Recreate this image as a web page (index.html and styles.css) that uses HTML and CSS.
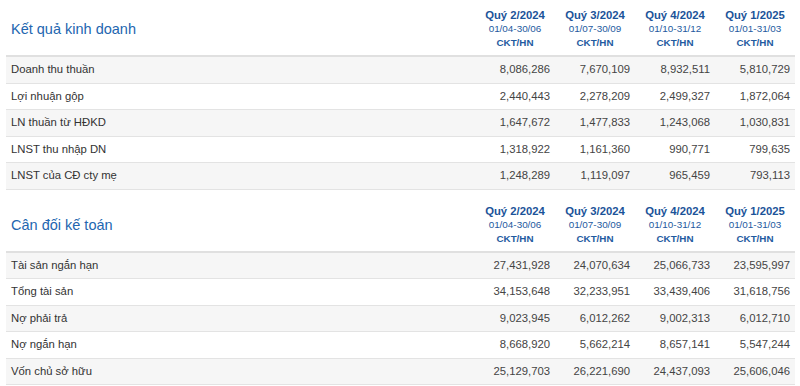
FILE: index.html
```html
<!DOCTYPE html>
<html lang="vi">

<head>
    <meta charset="UTF-8">
    <meta name="viewport" content="width=device-width, initial-scale=1.0">
    <title>Kết quả kinh doanh</title>
    <link rel="stylesheet" href="styles.css">
</head>

<body>
    <div class="finance">
        <table class="fin-table">
            <thead>
                <tr>
                    <th class="title">Kết quả kinh doanh</th>
                    <th class="period"><b>Quý 2/2024</b><span>01/04-30/06</span><b class="audit">CKT/HN</b></th>
                    <th class="period"><b>Quý 3/2024</b><span>01/07-30/09</span><b class="audit">CKT/HN</b></th>
                    <th class="period"><b>Quý 4/2024</b><span>01/10-31/12</span><b class="audit">CKT/HN</b></th>
                    <th class="period"><b>Quý 1/2025</b><span>01/01-31/03</span><b class="audit">CKT/HN</b></th>
                </tr>
            </thead>
            <tbody>
                <tr><td>Doanh thu thuần</td><td>8,086,286</td><td>7,670,109</td><td>8,932,511</td><td>5,810,729</td></tr>
                <tr><td>Lợi nhuận gộp</td><td>2,440,443</td><td>2,278,209</td><td>2,499,327</td><td>1,872,064</td></tr>
                <tr><td>LN thuần từ HĐKD</td><td>1,647,672</td><td>1,477,833</td><td>1,243,068</td><td>1,030,831</td></tr>
                <tr><td>LNST thu nhập DN</td><td>1,318,922</td><td>1,161,360</td><td>990,771</td><td>799,635</td></tr>
                <tr><td>LNST của CĐ cty mẹ</td><td>1,248,289</td><td>1,119,097</td><td>965,459</td><td>793,113</td></tr>
            </tbody>
        </table>

        <table class="fin-table">
            <thead>
                <tr>
                    <th class="title">Cân đối kế toán</th>
                    <th class="period"><b>Quý 2/2024</b><span>01/04-30/06</span><b class="audit">CKT/HN</b></th>
                    <th class="period"><b>Quý 3/2024</b><span>01/07-30/09</span><b class="audit">CKT/HN</b></th>
                    <th class="period"><b>Quý 4/2024</b><span>01/10-31/12</span><b class="audit">CKT/HN</b></th>
                    <th class="period"><b>Quý 1/2025</b><span>01/01-31/03</span><b class="audit">CKT/HN</b></th>
                </tr>
            </thead>
            <tbody>
                <tr><td>Tài sản ngắn hạn</td><td>27,431,928</td><td>24,070,634</td><td>25,066,733</td><td>23,595,997</td></tr>
                <tr><td>Tổng tài sản</td><td>34,153,648</td><td>32,233,951</td><td>33,439,406</td><td>31,618,756</td></tr>
                <tr><td>Nợ phải trả</td><td>9,023,945</td><td>6,012,262</td><td>9,002,313</td><td>6,012,710</td></tr>
                <tr><td>Nợ ngắn hạn</td><td>8,668,920</td><td>5,662,214</td><td>8,657,141</td><td>5,547,244</td></tr>
                <tr><td>Vốn chủ sở hữu</td><td>25,129,703</td><td>26,221,690</td><td>24,437,093</td><td>25,606,046</td></tr>
            </tbody>
        </table>
    </div>
</body>

</html>
```

FILE: styles.css
```css
body {
    font-family: 'Liberation Sans', Arial, sans-serif;
    background-color: #fff;
    margin: 0;
    padding: 0;
    color: #333;
}

.finance {
    margin: 0 5px 0 6px;
}

.fin-table {
    width: 100%;
    border-collapse: collapse;
    table-layout: fixed;
}

.fin-table + .fin-table {
    margin-top: 6px;
}

.fin-table th {
    font-weight: normal;
    padding: 8px 0 5px 0;
    vertical-align: middle;
    border-bottom: 2px solid #e0e0e0;
}

.fin-table th.title {
    text-align: left;
    font-size: 14.5px;
    color: #2366b0;
    padding-left: 5px;
}

.fin-table th.period {
    width: 80px;
    text-align: center;
    color: #1b5399;
    line-height: 14px;
}

.period b,
.period span {
    display: block;
}

.period b {
    font-size: 11.3px;
    font-weight: bold;
}

.period span {
    font-size: 9.9px;
    color: #1e5aa0;
}

.period b.audit {
    font-size: 9.8px;
    color: #1e5aa0;
}

.fin-table td {
    font-size: 11.3px;
    line-height: 15.5px;
    padding: 5px 5px 5px 5px;
    border-bottom: 1px solid #e3e3e3;
    text-align: right;
    color: #444;
}

.fin-table td:first-child {
    text-align: left;
    color: #333;
}

.fin-table tbody tr:nth-child(odd) {
    background-color: #f6f6f6;
}
```
